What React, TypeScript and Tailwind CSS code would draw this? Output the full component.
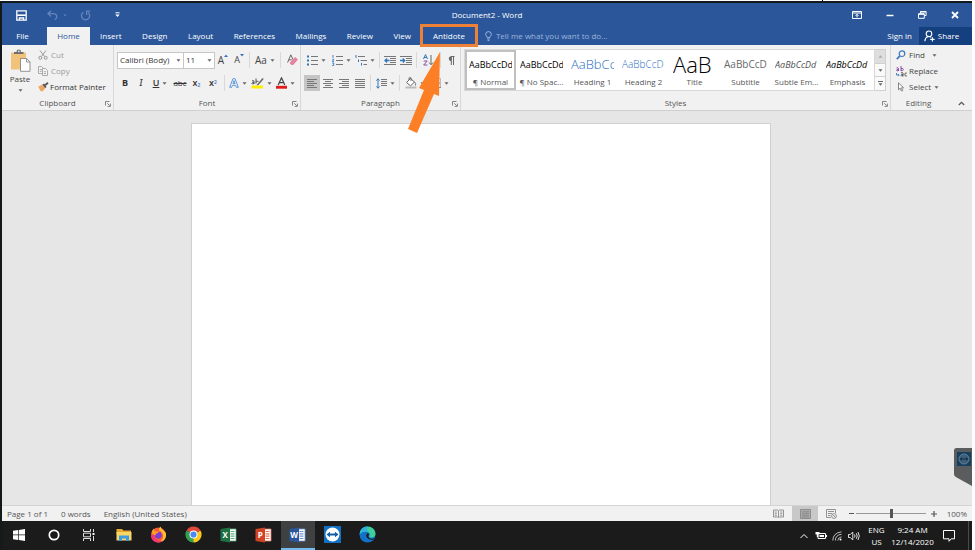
import type { ReactNode } from "react"
import { clsx } from "clsx"

const TABS = ["Insert", "Design", "Layout", "References", "Mailings", "Review", "View"]

const STYLES = [
  { name: "¶ Normal", sample: "AaBbCcDd", look: "text-[9px] text-black", active: true },
  { name: "¶ No Spac...", sample: "AaBbCcDd", look: "text-[9px] text-black" },
  { name: "Heading 1", sample: "AaBbCc", look: "text-[13px] font-light text-[#1f6fbf]" },
  { name: "Heading 2", sample: "AaBbCcD", look: "text-[10px] font-light text-[#1f6fbf]" },
  { name: "Title", sample: "AaB", look: "text-[22px] font-light text-black" },
  { name: "Subtitle", sample: "AaBbCcD", look: "text-[10px] text-[#6a6a6a]" },
  { name: "Subtle Em...", sample: "AaBbCcDd", look: "text-[9px] italic text-[#505050]" },
  { name: "Emphasis", sample: "AaBbCcDd", look: "text-[9px] italic text-black" },
]

function Caret() {
  return (
    <svg width="5" height="3" viewBox="0 0 5 3" className="shrink-0" aria-hidden="true">
      <path d="M0.5 0.3h4L2.5 2.7z" fill="#666" />
    </svg>
  )
}

function Sep() {
  return <span className="mx-[2px] h-4 w-px shrink-0 bg-[#d8d8d8]" />
}

function Tool({
  label,
  className,
  caret,
  children,
}: {
  label: string
  className: string
  caret?: boolean
  children: ReactNode
}) {
  return (
    <button
      type="button"
      aria-label={label}
      className={clsx("flex h-4 shrink-0 items-center justify-center gap-[3px]", className)}
    >
      {children}
      {caret && <Caret />}
    </button>
  )
}

function Launcher({ label }: { label: string }) {
  return (
    <button type="button" aria-label={label} className="absolute right-[2px] bottom-[3px]">
      <svg width="6" height="6" viewBox="0 0 6 6" fill="none" stroke="#777" strokeWidth="0.9" aria-hidden="true">
        <path d="M0.5 4.5v-4h4M2.3 2.3l2.4 2.4M5.4 2.6v2.8H2.6" />
      </svg>
    </button>
  )
}

function Group({
  title,
  className,
  launcher = true,
  children,
}: {
  title: string
  className: string
  launcher?: boolean
  children: ReactNode
}) {
  return (
    <section aria-label={title} className={clsx("relative flex flex-col", className)}>
      <div className="h-[52px]">{children}</div>
      <h2 className="text-center leading-[14px] text-[#555]">{title}</h2>
      {launcher && <Launcher label={`${title} settings`} />}
    </section>
  )
}

// horizontal rules used by the paragraph buttons, one [x1, x2] per row
function Lines({ rows, top = 1, gap = 2 }: { rows: number[][]; top?: number; gap?: number }) {
  return (
    <g stroke="#777" strokeWidth="1">
      {rows.map(([a, b], i) => (
        <path key={i} d={`M${a} ${top + i * gap + 0.5}H${b}`} />
      ))}
    </g>
  )
}

function TitleBar() {
  return (
    <div className="grid h-6 grid-cols-3 items-center text-white">
      <div className="flex items-center pl-[14px]">
        <button type="button" aria-label="Save">
          <svg width="11" height="11" viewBox="0 0 11 11" fill="none" stroke="#fff" strokeWidth="1.3" aria-hidden="true">
            <path d="M0.8 0.8h9.4v9.4H0.8z" />
            <path d="M1.2 5.2h8.6" strokeWidth="1.6" />
            <path d="M3.4 10V8h4.2v2" />
          </svg>
        </button>
        <button type="button" aria-label="Undo" className="ml-5 flex items-center gap-[5px]">
          <svg width="11" height="10" viewBox="0 0 11 10" fill="none" stroke="#6384bd" strokeWidth="1.3" aria-hidden="true">
            <path d="M4 0.8L1 3.6l3 2.8M1.2 3.6h5.6q3 0.4 3 3 0 2-2 3" />
          </svg>
          <svg width="4" height="3" viewBox="0 0 4 3" aria-hidden="true">
            <path d="M0.5 0.5h3L2 2.5z" fill="#6384bd" />
          </svg>
        </button>
        <button type="button" aria-label="Redo" className="ml-[13px]">
          <svg width="11" height="11" viewBox="0 0 11 11" fill="none" stroke="#6384bd" strokeWidth="1.3" aria-hidden="true">
            <path d="M3.4 2.2a4.1 4.1 0 1 0 4.6 0.2M6.6 5V1.2h3.6" />
          </svg>
        </button>
        <button type="button" aria-label="Customize Quick Access Toolbar" className="ml-6">
          <svg width="5" height="6" viewBox="0 0 5 6" aria-hidden="true">
            <path d="M0.5 0.8h4" stroke="#fff" />
            <path d="M0.3 2.6h4.4L2.5 5z" fill="#fff" />
          </svg>
        </button>
      </div>
      <h1 className="text-center">Document2 - Word</h1>
      <div className="flex items-center justify-end gap-6 pr-[13px]">
        <button type="button" aria-label="Ribbon Display Options">
          <svg width="10" height="8" viewBox="0 0 10 8" fill="none" stroke="#fff" aria-hidden="true">
            <path d="M0.5 0.5h9v7h-9zM1 2h8M5 6.4V3.4M3.6 4.8L5 3.3l1.4 1.5" />
          </svg>
        </button>
        <button type="button" aria-label="Minimize">
          <svg width="8" height="8" viewBox="0 0 8 8" aria-hidden="true">
            <path d="M0.5 4.5h7" stroke="#fff" strokeWidth="1.5" />
          </svg>
        </button>
        <button type="button" aria-label="Restore">
          <svg width="9" height="8" viewBox="0 0 9 8" fill="none" stroke="#fff" aria-hidden="true">
            <path d="M2.5 2V0.5h5.6v4H6.6M0.5 2.9h5.8v4.4H0.5z" />
            <path d="M0.5 3h5.8M2.5 0.8h5.6" strokeWidth="1.5" />
          </svg>
        </button>
        <button type="button" aria-label="Close">
          <svg width="8" height="8" viewBox="0 0 8 8" stroke="#fff" strokeWidth="1.8" aria-hidden="true">
            <path d="M1 1l6 6M7 1L1 7" />
          </svg>
        </button>
      </div>
    </div>
  )
}

function TabRow() {
  return (
    <nav className="flex h-[18px] items-stretch text-white">
      <button type="button" className="w-[45px] pr-1">File</button>
      <button type="button" className="w-[43px] bg-[#f1f1f1] text-[#2b579a]">Home</button>
      <div className="flex w-[331px] justify-between">
        {TABS.map((tab) => (
          <button key={tab} type="button" className="px-[10px]">
            {tab}
          </button>
        ))}
      </div>
      <div className="relative flex">
        <button type="button" className="px-3">Antidote</button>
        <span className="pointer-events-none absolute -inset-x-px -top-[3px] -bottom-[2px] z-10 border-3 border-[#ed8137]" />
        <svg
          width="36"
          height="84"
          viewBox="0 0 36 84"
          className="pointer-events-none absolute top-6 right-[35px] z-10"
          aria-hidden="true"
        >
          <path d="M34 1L33 45 28 43 11 82 2 78 18 39 13 37z" fill="#fd7f25" />
        </svg>
      </div>
      <label className="ml-2 flex flex-1 items-center gap-1">
        <svg width="7" height="10" viewBox="0 0 7 10" fill="none" stroke="#a9bfe2" strokeWidth="0.9" aria-hidden="true">
          <path d="M2.2 6.6C2.2 5.4 0.7 4.8 0.7 3.2a2.8 2.6 0 0 1 5.6 0c0 1.6-1.5 2.2-1.5 3.4zM2.2 8h2.6M2.6 9.4h1.8" />
        </svg>
        <input
          aria-label="Tell me what you want to do"
          placeholder="Tell me what you want to do..."
          className="w-[140px] bg-transparent outline-none placeholder:text-[#9db4da]"
        />
      </label>
      <button type="button" className="px-[7px]">Sign in</button>
      <button type="button" className="flex w-[53px] items-center justify-center gap-[3px] bg-[#15407f] pr-2">
        <svg width="11" height="12" viewBox="0 0 11 12" fill="none" stroke="#fff" strokeWidth="1.1" aria-hidden="true">
          <circle cx="5" cy="3.8" r="2.8" />
          <path d="M0.8 11.2C1 8.8 2.2 7.4 4 6.6M6 6.6l1.2 0.8M6.2 9.4h4.4M8.4 7.2v4.4" />
        </svg>
        Share
      </button>
    </nav>
  )
}

function Clipboard() {
  return (
    <Group title="Clipboard" className="w-[112px] border-r border-[#d8d8d8]">
      <div className="flex pt-[2px] pl-[7px]">
        <button type="button" className="flex w-[22px] flex-col items-center pt-[2px]">
          <svg width="21" height="23" viewBox="0 0 21 23" aria-hidden="true">
            <path d="M1 3.5h15v17H1z" fill="#f0c27a" />
            <path d="M4 5V3h2.5q0-2.4 2.3-2.4T11 3h2.5v2z" fill="#6f6f6f" />
            <circle cx="8.8" cy="2.4" r="0.8" fill="#fff" />
            <path d="M10.5 9.5h6l3.5 3.4v9.4h-9.5z" fill="#fff" stroke="#888" strokeWidth="0.9" />
            <path d="M16.5 9.5V13H20" fill="none" stroke="#888" strokeWidth="0.9" />
          </svg>
          <span className="mt-[2px] leading-[10px]">Paste</span>
          <span className="flex h-3 items-center">
            <Caret />
          </span>
        </button>
        <div className="ml-[7px] flex flex-col text-[#999]">
          <button type="button" className="flex h-4 items-center gap-[3px]">
            <svg width="10" height="10" viewBox="0 0 10 10" fill="none" stroke="#999" strokeWidth="1" aria-hidden="true">
              <path d="M2 0.5l4.6 6M8 0.5L3.4 6.5" />
              <circle cx="2.3" cy="7.8" r="1.5" />
              <circle cx="7.7" cy="7.8" r="1.5" />
            </svg>
            Cut
          </button>
          <button type="button" className="flex h-4 items-center gap-[3px]">
            <svg width="10" height="10" viewBox="0 0 10 10" fill="#f4f4f4" stroke="#a3a3a3" strokeWidth="0.9" aria-hidden="true">
              <path d="M0.5 0.5h3l2 2v5h-5zM1.8 3.5h2M1.8 5.3h2" />
              <path d="M4.5 2.5h3l2 2v5h-5zM5.8 5.7H8M5.8 7.5H8" />
            </svg>
            Copy
          </button>
          <button type="button" className="flex h-4 items-center gap-px whitespace-nowrap text-[#333]">
            <svg width="11" height="10" viewBox="0 0 11 10" aria-hidden="true">
              <path d="M0.3 4.5l4-2L7 6.5 4.5 9.5 2.5 9z" fill="#f0a660" />
              <path d="M4.5 2.5L6 1.5 8.5 5 7 6.3z" fill="#555" />
              <path d="M7 3.2L10 0.8" stroke="#555" strokeWidth="1.8" />
            </svg>
            Format Painter
          </button>
        </div>
      </div>
    </Group>
  )
}

function FontGroup() {
  return (
    <Group title="Font" className="w-[187px] border-r border-[#d8d8d8]">
      <div className="flex h-[30px] items-center pl-[3px]">
        <div className="relative flex items-center">
          <select
            aria-label="Font name"
            className="h-[17px] w-[67px] appearance-none border border-[#c6c6c6] bg-white pl-[2px] text-[#333]"
          >
            <option>Calibri (Body)</option>
          </select>
          <span className="pointer-events-none absolute right-[3px]"><Caret /></span>
        </div>
        <div className="relative flex items-center">
          <select
            aria-label="Font size"
            className="-ml-px h-[17px] w-[32px] appearance-none border border-[#c6c6c6] bg-white pl-[2px] text-[#333]"
          >
            <option>11</option>
          </select>
          <span className="pointer-events-none absolute right-[3px]"><Caret /></span>
        </div>
        <Tool label="Increase font size" className="w-4 text-[10px] text-[#444]">
          <span className="flex">
            A
            <svg width="4" height="3" viewBox="0 0 4 3" aria-hidden="true">
              <path d="M0 3h4L2 0.5z" fill="#3e6db5" />
            </svg>
          </span>
        </Tool>
        <Tool label="Decrease font size" className="w-4 text-[9px] text-[#444]">
          <span className="flex">
            A
            <svg width="4" height="3" viewBox="0 0 4 3" aria-hidden="true">
              <path d="M0 0h4L2 2.5z" fill="#3e6db5" />
            </svg>
          </span>
        </Tool>
        <Sep />
        <Tool label="Change case" caret className="w-[26px] text-[10px] text-[#444]">Aa</Tool>
        <Sep />
        <Tool label="Clear formatting" className="w-[18px]">
          <svg width="11" height="12" viewBox="0 0 11 12" aria-hidden="true">
            <path d="M0.6 8.5L3.8 0.8 6 5.5M1.8 5.8h3" fill="none" stroke="#666" />
            <path d="M3.2 8.2l4.8-5.2 3 2.5-4.8 5.4H4.5L2.9 9.6z" fill="#e8809f" />
          </svg>
        </Tool>
      </div>
      <div className="flex h-4 items-center pl-[3px] text-[#333]">
        <Tool label="Bold" className="w-4 text-[9px] font-bold">B</Tool>
        <Tool label="Italic" className="w-4 font-serif text-[10px] italic">I</Tool>
        <Tool label="Underline" caret className="w-[22px] text-[9px] font-semibold underline">U</Tool>
        <Tool label="Strikethrough" className="w-[18px] line-through">abc</Tool>
        <Tool label="Subscript" className="w-[15px] text-[9px] font-semibold">
          <span>x<sub className="text-[5px] text-[#3e6db5]">2</sub></span>
        </Tool>
        <Tool label="Superscript" className="w-[18px] text-[9px] font-semibold">
          <span>x<sup className="text-[5px] text-[#3e6db5]">2</sup></span>
        </Tool>
        <Sep />
        <Tool label="Text effects" caret className="w-[22px]">
          <svg width="10" height="10" viewBox="0 0 10 10" fill="#fff" stroke="#5b93d6" strokeWidth="1" aria-hidden="true">
            <path d="M0.7 9.3L4 0.7h2l3.3 8.6H7.4L6.7 7.3H3.3L2.6 9.3zM3.9 5.7h2.2L5 2.6z" />
          </svg>
        </Tool>
        <Tool label="Text highlight color" caret className="w-6">
          <svg width="13" height="12" viewBox="0 0 13 12" aria-hidden="true">
            <path d="M0.5 8.5H12v3H0.5z" fill="#ffee00" />
            <path d="M6 7.5L11.5 1l1.2 1L7.5 8 5.5 8.6z" fill="#666" />
            <path d="M1 4q1.2-1 2 0v3M3 5.3q-2.2 0-2 1.2t2 0M5 1.5v5.2M5 4.5q2-1.2 2.3 0.5" fill="none" stroke="#444" strokeWidth="0.9" />
          </svg>
        </Tool>
        <Tool label="Font color" caret className="w-6">
          <svg width="11" height="12" viewBox="0 0 11 12" aria-hidden="true">
            <path d="M0 8.8h11v2.9H0z" fill="#e01b1b" />
            <path d="M2.2 8L5.5 0.8 8.8 8M3.5 5.6h4" fill="none" stroke="#444" strokeWidth="1.2" />
          </svg>
        </Tool>
      </div>
    </Group>
  )
}

function Paragraph() {
  return (
    <Group title="Paragraph" className="w-[160px] border-r border-[#d8d8d8]">
      <div className="flex h-[30px] items-center pl-[3px]">
        <Tool label="Bullets" caret className="w-[25px]">
          <svg width="11" height="11" viewBox="0 0 11 11" aria-hidden="true">
            <path d="M0 0.5h2v2H0zM0 4.5h2v2H0zM0 8.5h2v2H0z" fill="#2f77bb" />
            <Lines rows={[[4, 11], [4, 11], [4, 11]]} gap={4} />
          </svg>
        </Tool>
        <Tool label="Numbering" caret className="w-6">
          <svg width="11" height="11" viewBox="0 0 11 11" aria-hidden="true">
            <path d="M1 0v2.8M0.3 4.2h1.4L0.5 6.5H2M0.2 8h1.5v2.5H0.2" fill="none" stroke="#2f77bb" strokeWidth="0.9" />
            <Lines rows={[[4, 11], [4, 11], [4, 11]]} gap={4} />
          </svg>
        </Tool>
        <Tool label="Multilevel list" caret className="w-6">
          <svg width="12" height="11" viewBox="0 0 12 11" aria-hidden="true">
            <path d="M1 0v3M3.5 4.5V7M6.5 8v2.5" stroke="#2f77bb" />
            <Lines rows={[[3, 10], [5.5, 12], [8.5, 12]]} gap={4} />
          </svg>
        </Tool>
        <Sep />
        <Tool label="Decrease indent" className="w-4">
          <svg width="12" height="9" viewBox="0 0 12 9" aria-hidden="true">
            <Lines rows={[[0, 12], [6, 12], [6, 12], [6, 12], [0, 12]]} top={0} />
            <path d="M5.5 4.5H1M3 2.500l-2 2 2 2" fill="none" stroke="#2f77bb" strokeWidth="1.3" />
          </svg>
        </Tool>
        <Tool label="Increase indent" className="w-4">
          <svg width="12" height="9" viewBox="0 0 12 9" aria-hidden="true">
            <Lines rows={[[0, 12], [6, 12], [6, 12], [6, 12], [0, 12]]} top={0} />
            <path d="M0 4.5h4.5M2.8 2.5l2 2-2 2" fill="none" stroke="#2f77bb" strokeWidth="1.3" />
          </svg>
        </Tool>
        <Sep />
        <Tool label="Sort" className="w-[19px]">
          <svg width="11" height="12" viewBox="0 0 11 12" fill="none" aria-hidden="true">
            <path d="M0.5 5l2-4.500 2 4.500M1.200 3.500h2.600" stroke="#2f77bb" />
            <path d="M0.700 7h3.500L0.700 11h3.700" stroke="#8a4fa3" />
            <path d="M8 1v9.500M6 8.500l2 2.200 2-2.200" stroke="#666" />
          </svg>
        </Tool>
        <Sep />
        <Tool label="Show formatting marks" className="w-4">
          <svg width="8" height="9" viewBox="0 0 8 9" aria-hidden="true">
            <path d="M4 0.5h3.500M4.300 0.500V9M6.500 0.500V9" stroke="#666" fill="none" />
            <path d="M4.300 0.200a2.500 2.500 0 0 0 0 5z" fill="#666" />
          </svg>
        </Tool>
      </div>
      <div className="flex h-4 items-center pl-[3px]">
        <Tool label="Align left" className="w-4 bg-[#c5c5c5]">
          <svg width="10" height="9" viewBox="0 0 10 9" aria-hidden="true">
            <Lines top={0} rows={[[0, 10], [0, 7], [0, 10], [0, 7], [0, 10]]} />
          </svg>
        </Tool>
        <Tool label="Center" className="w-4">
          <svg width="10" height="9" viewBox="0 0 10 9" aria-hidden="true">
            <Lines top={0} rows={[[0, 10], [2, 8], [0, 10], [2, 8], [0, 10]]} />
          </svg>
        </Tool>
        <Tool label="Align right" className="w-4">
          <svg width="10" height="9" viewBox="0 0 10 9" aria-hidden="true">
            <Lines top={0} rows={[[0, 10], [3, 10], [0, 10], [3, 10], [0, 10]]} />
          </svg>
        </Tool>
        <Tool label="Justify" className="w-4">
          <svg width="10" height="9" viewBox="0 0 10 9" aria-hidden="true">
            <Lines top={0} rows={[[0, 10], [0, 10], [0, 10], [0, 10], [0, 10]]} />
          </svg>
        </Tool>
        <Sep />
        <Tool label="Line spacing" caret className="w-6">
          <svg width="11" height="11" viewBox="0 0 11 11" aria-hidden="true">
            <path d="M2 0.8v9.4M0.4 2.6L2 0.8l1.600 1.800M0.400 8.400L2 10.200l1.600-1.800" fill="none" stroke="#2f77bb" />
            <Lines rows={[[5, 11], [5, 11], [5, 11], [5, 11]]} />
          </svg>
        </Tool>
        <Sep />
        <Tool label="Shading" caret className="w-[26px]">
          <svg width="12" height="12" viewBox="0 0 12 12" aria-hidden="true">
            <path d="M1.5 5.5l4-4 4 3.500-4 3.800z" fill="#fff" stroke="#666" />
            <path d="M4 3V0.800h2V4M9.500 5q1.800 1.500 1 3.500" fill="none" stroke="#666" strokeWidth="0.9" />
            <path d="M0.500 9.500h11v2h-11z" fill="#bbb" />
          </svg>
        </Tool>
        <Tool label="Borders" caret className="w-6">
          <svg width="10" height="10" viewBox="0 0 10 10" fill="none" stroke="#888" aria-hidden="true">
            <path d="M0.500 0.500h9v9h-9zM5 0v10M0 5h10" strokeDasharray="1 1" />
            <path d="M0 9.500h10" />
          </svg>
        </Tool>
      </div>
    </Group>
  )
}

function Styles() {
  return (
    <Group title="Styles" className="min-w-0 flex-1 border-r border-[#d8d8d8]">
      <div className="flex pt-1 pr-1 pl-[3px]">
        <div className="flex h-[42px] flex-1 overflow-hidden border border-[#d8d8d8] bg-white">
          {STYLES.map((s) => (
            <button
              key={s.name}
              type="button"
              className={clsx(
                "flex w-[51px] flex-col items-center justify-end border-2 px-[2px]",
                s.active ? "border-[#c0c0c0]" : "border-transparent",
              )}
            >
              <span
                className={clsx(
                  "flex h-6 w-full items-center overflow-hidden leading-none whitespace-nowrap",
                  s.look,
                )}
              >
                {s.sample}
              </span>
              <span className="leading-3 whitespace-nowrap text-[#555]">{s.name}</span>
            </button>
          ))}
        </div>
        <div className="flex h-[42px] w-[11px] flex-col divide-y divide-[#d0d0d0] border border-l-0 border-[#d0d0d0] bg-[#fafafa]">
          <button type="button" aria-label="Previous styles" className="flex flex-1 items-center justify-center bg-[#dedede]">
            <svg width="5" height="3" viewBox="0 0 5 3" aria-hidden="true">
              <path d="M0.5 2.700h4L2.500 0.300z" fill="#aaa" />
            </svg>
          </button>
          <button type="button" aria-label="Next styles" className="flex flex-1 items-center justify-center">
            <Caret />
          </button>
          <button type="button" aria-label="More styles" className="flex flex-1 flex-col items-center justify-center gap-px">
            <span className="h-px w-[5px] bg-[#666]" />
            <Caret />
          </button>
        </div>
      </div>
    </Group>
  )
}

function Editing() {
  return (
    <Group title="Editing" launcher={false} className="w-[55px]">
      <div className="flex flex-col pt-[2px] pl-[5px] text-[#444]">
        <button type="button" className="flex h-4 items-center gap-[3px]">
          <svg width="10" height="10" viewBox="0 0 10 10" fill="none" stroke="#3b78bd" strokeWidth="1.2" aria-hidden="true">
            <circle cx="6" cy="3.7" r="2.8" />
            <path d="M4 5.800L0.800 9.200" strokeWidth="1.7" />
          </svg>
          Find
          <span className="ml-1"><Caret /></span>
        </button>
        <button type="button" className="flex h-4 items-center gap-[2px]">
          <svg width="11" height="11" viewBox="0 0 11 11" fill="none" aria-hidden="true">
            <path d="M0.5 2q2-0.800 2 0.500V5M2.500 3.300q-2 0-2 1t2 0.300M5 0v5M5 2.500q2.500-0.500 2.300 1T5 4.700" stroke="#8a4fa3" />
            <path d="M0.5 7v2H3M2 8l1.200 1L2 10.200" stroke="#3b78bd" strokeWidth="0.9" />
            <path d="M5 6.800q2-0.500 2 0.500v3M7 8.300q-2 0-2 1t2 0.500M10.800 7q-2-0.500-2 1.500t2 1.500" stroke="#555" />
          </svg>
          Replace
        </button>
        <button type="button" className="flex h-4 items-center gap-[3px]">
          <svg width="10" height="10" viewBox="0 0 10 10" fill="#fff" stroke="#777" strokeWidth="0.9" aria-hidden="true">
            <path d="M2.500 0.800v7l1.700-1.600 1.300 2.900 1.200-0.600-1.300-2.700h2.200z" />
          </svg>
          Select
          <Caret />
        </button>
      </div>
    </Group>
  )
}

function StatusBar() {
  return (
    <footer className="flex h-4 items-center border-t border-[#d4d4d4] bg-[#f1f1f1] pl-[5px] text-[#555]">
      <span>Page 1 of 1</span>
      <span className="ml-[13px]">0 words</span>
      <span className="ml-[13px] flex-1">English (United States)</span>
      <button type="button" aria-label="Read Mode" className="mr-2">
        <svg width="11" height="9" viewBox="0 0 11 9" fill="none" stroke="#888" strokeWidth="0.9" aria-hidden="true">
          <path d="M0.500 1h4l1 0.800 1-0.800h4v7h-4l-1 0.700-1-0.700h-4zM5.500 1.800v6.500M1.800 3h2M1.800 4.700h2M1.800 6.300h2M7.200 3h2M7.200 4.700h2M7.200 6.300h2" />
        </svg>
      </button>
      <button type="button" aria-label="Print Layout" className="flex h-full w-[26px] items-center justify-center bg-[#c8c8c8]">
        <svg width="11" height="10" viewBox="0 0 11 10" fill="#aaa" stroke="#888" strokeWidth="0.9" aria-hidden="true">
          <path d="M0.500 0.500h10v9h-10zM2 2.800h7M2 4.600h7M2 6.400h7M2 8h7" />
        </svg>
      </button>
      <button type="button" aria-label="Web Layout" className="ml-2">
        <svg width="11" height="10" viewBox="0 0 11 10" fill="none" stroke="#888" strokeWidth="0.9" aria-hidden="true">
          <path d="M5 8.500H0.500v-8h9V4M2 2.500h6M2 4.500h4M2 6.500h2.500" />
          <circle cx="8" cy="7" r="2.4" />
          <path d="M6.500 5.500l3 3" />
        </svg>
      </button>
      <button type="button" aria-label="Zoom out" className="ml-[10px] flex h-3 w-2 items-center justify-center">
        <svg width="5" height="5" viewBox="0 0 5 5" stroke="#555" aria-hidden="true">
          <path d="M0 2.500h5" />
        </svg>
      </button>
      <input
        type="range"
        aria-label="Zoom"
        min={10}
        max={190}
        defaultValue={100}
        className="mx-px h-3 w-[70px] appearance-none bg-transparent [&::-webkit-slider-runnable-track]:h-px [&::-webkit-slider-runnable-track]:bg-[#999] [&::-webkit-slider-thumb]:-mt-1 [&::-webkit-slider-thumb]:h-[9px] [&::-webkit-slider-thumb]:w-[3px] [&::-webkit-slider-thumb]:appearance-none [&::-webkit-slider-thumb]:bg-[#555]"
      />
      <button type="button" aria-label="Zoom in" className="ml-[3px] flex h-3 w-2 items-center justify-center">
        <svg width="6" height="6" viewBox="0 0 6 6" stroke="#555" strokeWidth="1.2" aria-hidden="true">
          <path d="M0 3h6M3 0v6" />
        </svg>
      </button>
      <button type="button" className="w-[34px] pr-[5px] text-right">100%</button>
    </footer>
  )
}

function OfficeIcon({ letter, dark, light }: { letter: string; dark: string; light: string }) {
  return (
    <svg width="17" height="16" viewBox="0 0 17 16" aria-hidden="true">
      <path d="M9 2h7v12H9z" fill="#fff" stroke={light} strokeWidth="0.8" />
      <path d="M10.500 4.500h4M10.500 6.800h4M10.500 9.200h4M10.500 11.500h4" stroke={light} strokeWidth="1.2" />
      <path d="M0.500 2L10 0.500v15L0.500 14z" fill={dark} />
      <text x="5.2" y="11" textAnchor="middle" fontSize="8" fontWeight="700" fill="#fff">{letter}</text>
    </svg>
  )
}

const APPS: { label: string; icon: ReactNode; active?: boolean }[] = [
  {
    label: "Start",
    icon: (
      <svg width="12" height="12" viewBox="0 0 12 12" fill="#fff" aria-hidden="true">
        <path d="M0 1.700L5.300 1v4.600H0zM6 0.900L12 0v5.600H6zM0 6.300h5.300v4.600L0 10.200zM6 6.300h6V12l-6-0.900z" />
      </svg>
    ),
  },
  {
    label: "Search",
    icon: (
      <svg width="12" height="12" viewBox="0 0 12 12" aria-hidden="true">
        <circle cx="6" cy="6" r="4.7" fill="none" stroke="#fff" strokeWidth="1.7" />
      </svg>
    ),
  },
  {
    label: "Task View",
    icon: (
      <svg width="12" height="12" viewBox="0 0 12 12" fill="none" stroke="#ddd" aria-hidden="true">
        <path d="M0.500 0v2.500h7V0M0.500 12V9.500h7V12M0.500 4.200h7v3.600h-7zM10.500 0v3M10.500 7v5" />
        <path d="M9.500 4h2v2h-2z" fill="#fff" stroke="none" />
      </svg>
    ),
  },
  {
    label: "File Explorer",
    icon: (
      <svg width="16" height="14" viewBox="0 0 16 14" aria-hidden="true">
        <path d="M0.500 1H6l1.500 1.500H15V6H0.500z" fill="#e8a82f" />
        <path d="M0.500 4h15v8.500h-15z" fill="#fbd667" />
        <path d="M3 13V7.500h10V13h-3v-2.500H6V13z" fill="#3f9be0" />
      </svg>
    ),
  },
  {
    label: "Firefox",
    icon: (
      <svg width="17" height="17" viewBox="0 0 17 17" aria-hidden="true">
        <circle cx="8.5" cy="9" r="7.5" fill="#ff5a36" />
        <path d="M10.500 0.500q0.500 2.500 3 4t2.500 5q-0.500 6-7 6.800Q14 13 13 9T9 4.500Q9 2 10.500 0.500z" fill="#ffc22e" />
        <path d="M1 9q0 6.500 6.500 7.500 4 0.300 6-2-5 1.500-7.500-1T5 9z" fill="#f0347a" />
        <circle cx="8.3" cy="9.2" r="3.4" fill="#7a3fd0" />
        <path d="M1.500 7Q2 3.500 4 2.500q0 2 1.500 3H9q-0.500 1.700-2.500 2L5 9.500z" fill="#ff9a2a" />
      </svg>
    ),
  },
  {
    label: "Chrome",
    icon: (
      <svg width="17" height="17" viewBox="0 0 17 17" aria-hidden="true">
        <path d="M8.500 8.500L1.570 4.500a8 8 0 0 1 13.860 0z" fill="#e2483a" />
        <path d="M8.500 8.500l6.930-4a8 8 0 0 1-6.930 12z" fill="#fbc91d" />
        <path d="M8.500 8.500v8a8 8 0 0 1-6.930-12z" fill="#34a052" />
        <path d="M8.500 16.500L12 10.500 8.500 11z" fill="#fbc91d" />
        <circle cx="8.5" cy="8.5" r="4" fill="#fff" />
        <circle cx="8.5" cy="8.5" r="3.1" fill="#4a8af4" />
      </svg>
    ),
  },
  { label: "Excel", icon: <OfficeIcon letter="X" dark="#1f7145" light="#5fae82" /> },
  { label: "PowerPoint", icon: <OfficeIcon letter="P" dark="#d04423" light="#e2795f" /> },
  { label: "Word", icon: <OfficeIcon letter="W" dark="#2b579a" light="#6f97d4" />, active: true },
  {
    label: "TeamViewer",
    icon: (
      <svg width="17" height="17" viewBox="0 0 17 17" aria-hidden="true">
        <path d="M0 0h17v17H0z" fill="#1271c4" />
        <circle cx="8.5" cy="8.5" r="7" fill="#fff" />
        <path d="M2.500 8.500L6 5.700v1.900h5V5.700l3.500 2.800-3.500 2.800V9.400H6v1.900z" fill="#0f5ea8" />
      </svg>
    ),
  },
  {
    label: "Edge",
    icon: (
      <svg width="17" height="17" viewBox="0 0 17 17" aria-hidden="true">
        <circle cx="8.5" cy="8.5" r="8" fill="#1272c8" />
        <path d="M0.600 8Q1.500 0.800 8.500 0.500q7 0.300 8 7 0 4-4 4.200-3-0.200-2-2 1-2.200-1.500-3.700Q5 4.500 0.600 8z" fill="#3fcf9a" />
        <path d="M0.600 8Q1.500 0.800 8.500 0.500q-1 2.500 0.500 5.500Q5 4.500 0.600 8z" fill="#2fb1dc" />
        <path d="M7.800 7.500q-1.300 2.500 0.500 4.500t5.200 1.800q1.500-0.600 2-1.500-4 0.900-5.500-0.500t0-3.300Q9.500 6.600 7.800 7.500z" fill="#1b1b1b" />
      </svg>
    ),
  },
]

function Taskbar() {
  return (
    <div className="flex h-[29px] items-center bg-[#1b1b1b] pr-[3px] text-white">
      <div className="flex h-full w-[383px]">
        {APPS.map((app) => (
          <button
            key={app.label}
            type="button"
            aria-label={app.label}
            className={clsx(
              "flex flex-1 items-center justify-center border-b-2",
              app.active ? "border-[#76b9ed] bg-[#3e4042]" : "border-transparent",
            )}
          >
            {app.icon}
          </button>
        ))}
      </div>
      <div className="ml-auto flex h-full items-center">
        <button type="button" aria-label="Show hidden icons" className="flex w-4 justify-center">
          <svg width="8" height="6" viewBox="0 0 8 6" fill="none" stroke="#fff" aria-hidden="true">
            <path d="M0.500 5L4 1.500 7.500 5" />
          </svg>
        </button>
        <button type="button" aria-label="Battery" className="flex w-[17px] justify-center">
          <svg width="12" height="9" viewBox="0 0 12 9" aria-hidden="true">
            <path d="M3 2.500h7.500v5H3z" fill="none" stroke="#fff" />
            <path d="M4.500 4H9v2H4.500zM11 4h1v2h-1zM0.500 1h4v2.500H3.200V6H1.800V3.500H0.500z" fill="#fff" />
          </svg>
        </button>
        <button type="button" aria-label="Network" className="flex w-[17px] justify-center">
          <svg width="11" height="10" viewBox="0 0 11 10" fill="none" stroke="#bbb" aria-hidden="true">
            <path d="M0.800 9.500Q1 2 9.500 0.800M3.300 9.500Q3.500 4 9.500 3.200M5.800 9.500Q6 6.500 9.500 5.800" />
            <circle cx="8.5" cy="8.6" r="1" fill="#fff" stroke="none" />
          </svg>
        </button>
        <button type="button" aria-label="Volume" className="flex w-4 justify-center">
          <svg width="12" height="10" viewBox="0 0 12 10" fill="none" stroke="#ddd" aria-hidden="true">
            <path d="M0.500 3.500h1.800L4.800 1v8L2.300 6.500H0.500zM6.500 3.500q1 1.500 0 3M8.300 2.200q1.800 2.800 0 5.600M10 1q2.600 4 0 8" />
          </svg>
        </button>
        <button type="button" className="w-[29px] text-center leading-3">
          ENG
          <br />
          US
        </button>
        <button type="button" className="w-[43px] text-center leading-3">
          9:24 AM
          <br />
          12/14/2020
        </button>
        <button type="button" aria-label="Notifications" className="flex w-[30px] justify-center">
          <svg width="12" height="12" viewBox="0 0 12 12" fill="none" stroke="#fff" aria-hidden="true">
            <path d="M0.500 0.500h11v8.300H8.200L6 11.300V8.800H0.500z" />
          </svg>
        </button>
        <span className="ml-1 h-full w-px bg-[#4a4a4a]" />
      </div>
    </div>
  )
}

export default function App() {
  return (
    <div className="relative flex min-h-screen flex-col bg-white pt-px pr-[3px] font-['Open_Sans','Noto_Sans',sans-serif] text-[8px] leading-3">
      <span className="absolute top-0 right-[152px] h-px w-px bg-black" />
      <div className="flex flex-1 flex-col border-t-2 border-l-2 border-[#141a1c]">
        <header>
          <div className="bg-[#2b579a]">
            <TitleBar />
            <TabRow />
          </div>
          <div className="flex h-[66px] border-b border-[#cfcfcf] bg-[#f1f1f1] text-[#444]">
            <Clipboard />
            <FontGroup />
            <Paragraph />
            <Styles />
            <Editing />
            <button type="button" aria-label="Collapse the Ribbon" className="mr-[7px] mb-1 ml-3 self-end">
              <svg width="7" height="5" viewBox="0 0 7 5" fill="none" stroke="#555" strokeWidth="1.2" aria-hidden="true">
                <path d="M0.800 4l2.700-2.700L6.200 4" />
              </svg>
            </button>
          </div>
        </header>
        <main className="relative flex flex-1 justify-center bg-[#e6e6e6] pt-3 pr-3">
          <article aria-label="Document page" className="w-[580px] border border-b-0 border-[#d0d0d0] bg-white" />
          <button type="button" aria-label="TeamViewer panel" className="absolute right-0 bottom-[18px]">
            <svg width="18" height="39" viewBox="0 0 18 39" aria-hidden="true">
              <path d="M18 0H2.500Q0 0 0 2.500V26q0 2 1.800 3L18 38z" fill="#5a5c5e" />
              <path d="M3 4h14v14H3z" fill="#173f5f" />
              <circle cx="10" cy="11" r="5" fill="#3e5e78" stroke="#6f8ba1" strokeWidth="0.8" />
              <path d="M5.500 11L8 9.200v1.200h4V9.200l2.500 1.800-2.500 1.800v-1.200H8v1.200z" fill="#10304a" />
            </svg>
          </button>
        </main>
        <StatusBar />
        <Taskbar />
      </div>
    </div>
  )
}
